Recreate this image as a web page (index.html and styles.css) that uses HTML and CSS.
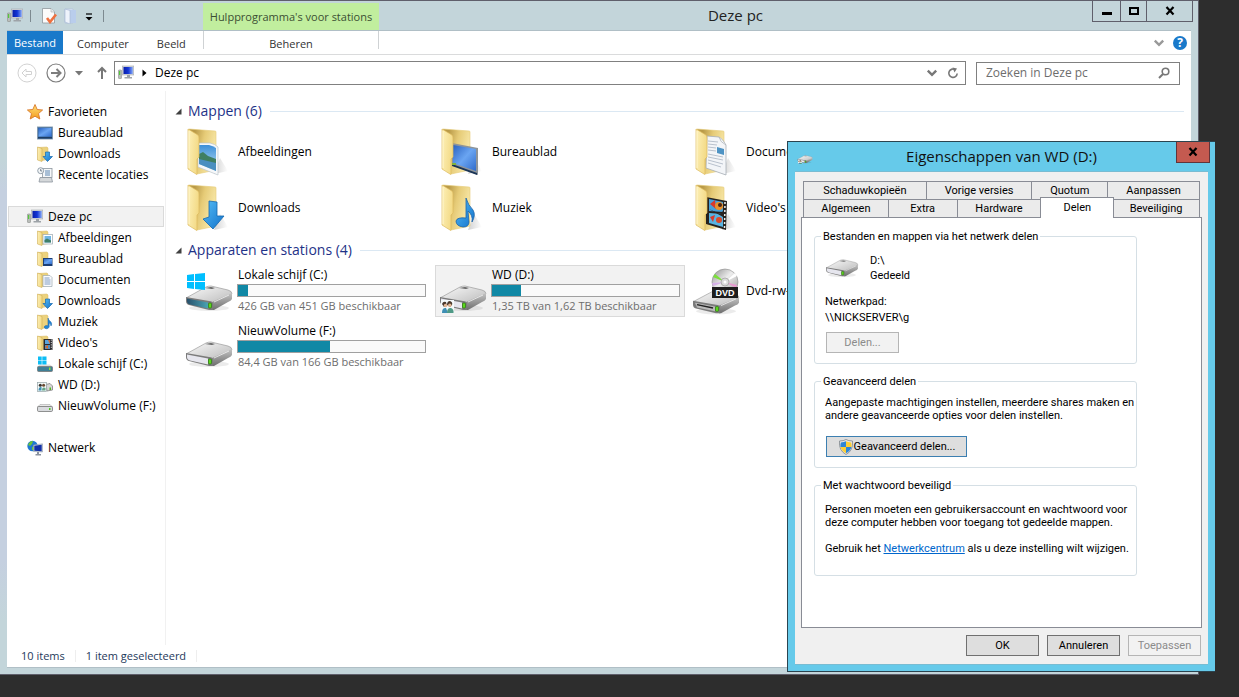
FILE: index.html
```html
<!DOCTYPE html>
<html lang="nl">
<head>
<meta charset="utf-8">
<title>Deze pc</title>
<link rel="stylesheet" href="styles.css">
</head>
<body>
<svg class="sprite" aria-hidden="true">
  <defs>
    <linearGradient id="gFlap" x1="0" y1="0" x2="1" y2="0.3"><stop offset="0" stop-color="#fdf0b8"/><stop offset="1" stop-color="#f3da86"/></linearGradient>
    <linearGradient id="gBack" x1="0" y1="0" x2="1" y2="0.4"><stop offset="0.2" stop-color="#b99a48"/><stop offset="0.55" stop-color="#e6cb77"/><stop offset="1" stop-color="#f8e8a8"/></linearGradient>
    <linearGradient id="gSky" x1="0" y1="0" x2="0" y2="1"><stop offset="0" stop-color="#3d8fd8"/><stop offset="1" stop-color="#bfe3f5"/></linearGradient>
    <linearGradient id="gScreen" x1="0" y1="0" x2="1" y2="1"><stop offset="0" stop-color="#2a62c0"/><stop offset="0.5" stop-color="#6aa5f2"/><stop offset="1" stop-color="#2f6bcb"/></linearGradient>
    <linearGradient id="gBlue" x1="0" y1="0" x2="1" y2="1"><stop offset="0" stop-color="#55bdf5"/><stop offset="1" stop-color="#1272cc"/></linearGradient>
    <linearGradient id="gTop" x1="0" y1="0" x2="1" y2="1"><stop offset="0" stop-color="#fbfbfb"/><stop offset="1" stop-color="#b9b9b9"/></linearGradient>
    <linearGradient id="gSide" x1="0" y1="0" x2="0" y2="1"><stop offset="0" stop-color="#c4c4c4"/><stop offset="1" stop-color="#6e6e6e"/></linearGradient>
    <linearGradient id="gTeal" x1="0" y1="0" x2="1" y2="0"><stop offset="0" stop-color="#27506b"/><stop offset="1" stop-color="#4aa3b3"/></linearGradient>
    <linearGradient id="gMon" x1="0" y1="0" x2="1" y2="0"><stop offset="0" stop-color="#0a1fa8"/><stop offset="0.5" stop-color="#1234d6"/><stop offset="1" stop-color="#86a8f4"/></linearGradient>
    <linearGradient id="gStar" x1="0" y1="0" x2="0" y2="1"><stop offset="0" stop-color="#ffe27a"/><stop offset="1" stop-color="#f39a1c"/></linearGradient>
    <linearGradient id="gDisc" x1="0" y1="0" x2="1" y2="1"><stop offset="0" stop-color="#8e8e8e"/><stop offset="0.45" stop-color="#ececec"/><stop offset="1" stop-color="#9a9a9a"/></linearGradient>
    <linearGradient id="gShade" x1="0" y1="0" x2="1" y2="0"><stop offset="0" stop-color="#9a9a9a" stop-opacity="0.45"/><stop offset="1" stop-color="#9a9a9a" stop-opacity="0"/></linearGradient>

    <symbol id="folderBase" viewBox="0 0 50 48">
      <path d="M30 46 L36 30 L44 43 Z" fill="url(#gShade)"/>
      <path d="M5 1 L31 3 Q32 3 32 4 L32 42 L13 46 Z" fill="url(#gBack)" stroke="#e6cb76" stroke-width="0.6"/>
    </symbol>
    <symbol id="folderFlap" viewBox="0 0 50 48">
      <path d="M4 1 L14 7 Q15 8 15 10 L15 29 L13 31 L13 46 Q13 47 12 46 L4 41 Z" fill="url(#gFlap)" stroke="#dcb95c" stroke-width="0.7"/>
      <path d="M5 3 L5 40" stroke="#fff6cf" stroke-width="1"/>
    </symbol>

    <symbol id="f-pictures" viewBox="0 0 50 48">
      <use href="#folderBase"/>
      <path d="M14 15 L26 15 Q31 16 34 19 L34 47 L14 39 Z" fill="#f6f8fa" stroke="#bcc4ca" stroke-width="0.7"/>
      <path d="M15 17 L25 17 Q29 18 32 20 L32 43 L15 36 Z" fill="url(#gSky)"/>
      <path d="M15 26 L19 24 L24 28 L32 31 L32 36 L15 33 Z" fill="#3f7f62"/>
      <path d="M15 31 L32 35 L32 43 L15 36 Z" fill="#4a8fc0"/>
      <use href="#folderFlap"/>
    </symbol>
    <symbol id="f-desktop" viewBox="0 0 50 48">
      <use href="#folderBase"/>
      <path d="M14 15 L40 20 L40 47 L14 37 Z" fill="#8e9499"/>
      <path d="M15 17 L38 21 L38 43 L15 35 Z" fill="url(#gScreen)"/>
      <path d="M14 36 L39 45 L39 47 L14 38 Z" fill="#1b3556"/>
      <path d="M14 35h4v2h-4z" fill="#7fb23c"/>
      <use href="#folderFlap"/>
    </symbol>
    <symbol id="f-docs" viewBox="0 0 50 48">
      <use href="#folderBase"/>
      <path d="M15 8 L27 9 Q31 11 34 17 L34 47 L14 40 Z" fill="#f3f5f8" stroke="#a6adb5" stroke-width="0.8"/>
      <path d="M27 9 Q28 14 34 17" fill="#fff" stroke="#a6adb5" stroke-width="0.8"/>
      <path d="M16 13 L26 14 M16 16 L25 17 M16 19 L24 20 M16 22 L24 23 M16 26 L31 29 M16 29 L31 32 M16 32 L31 36 M16 35 L29 39" stroke="#aab4c2" stroke-width="0.8"/>
      <path d="M25 19 L32 21 L32 27 L25 25 Z" fill="#4e93c4"/>
      <use href="#folderFlap"/>
    </symbol>
    <symbol id="f-downloads" viewBox="0 0 50 48">
      <use href="#folderBase"/><use href="#folderFlap"/>
      <path d="M25 17 L33 18 L33 32 L40 32 L29 45 L19 35 L25 33 Z" fill="url(#gBlue)" stroke="#1467ae" stroke-width="0.8"/>
    </symbol>
    <symbol id="f-music" viewBox="0 0 50 48">
      <use href="#folderBase"/><use href="#folderFlap"/>
      <path d="M28 14 Q30 21 35 26 Q38 31 34 38 Q35 31 30 27 L31 38 Q31 43 25 43 Q18 42 18 37 Q19 33 28 34 Z" fill="url(#gBlue)" stroke="#1b62a8" stroke-width="0.8"/>
    </symbol>
    <symbol id="f-videos" viewBox="0 0 50 48">
      <use href="#folderBase"/>
      <path d="M14 13 L35 17 L34 46 L14 40 Z" fill="#26221f"/>
      <path d="M17 15 L31 18 L31 28 L17 27 Z" fill="#47a0d8"/>
      <path d="M17 29 L31 30 L31 43 L17 39 Z" fill="#58b4e2"/>
      <path d="M18 20 L23 16 L24 25 Z M18 33 L23 31 L21 38Z" fill="#d8392b"/>
      <circle cx="27" cy="22" r="4" fill="#e8912b"/><circle cx="27" cy="36" r="3" fill="#d94a2b"/>
      <circle cx="28" cy="21" r="2" fill="#4a2415"/><path d="M17 25 L28 30 L31 27 L31 33Z" fill="#2b2320"/>
      <path d="M33 18 L32.500 45" stroke="#f2f2f2" stroke-width="1.500" stroke-dasharray="2 2"/>
      <use href="#folderFlap"/>
    </symbol>

    <symbol id="driveBody" viewBox="0 0 50 48">
      <ellipse cx="25" cy="41" rx="20" ry="3" fill="#000" opacity="0.08"/>
      <path d="M2 31 L22 20 Q24 19 27 19 L44 23 Q48 24 48 27 L30 36 L26 37 L4 32Z" fill="url(#gTop)" stroke="#8f8f8f" stroke-width="0.6"/>
      <path d="M28 35 L48 26 L48 32 Q47 34 44 35 L30 43 L28 43 Z" fill="url(#gSide)"/>
      <path d="M2 30 L25 34 Q29 34 29 37 L29 43 L25 43 L5 38 Q2 37 2 34 Z" fill="#7b7b7b"/>
      <path d="M21 21 L27 20 L31 21 L28 22Z" fill="#666"/>
      <path d="M30 35 L45 28" stroke="#f4f4f4" stroke-width="0.8"/>
    </symbol>
    <symbol id="driveLed" viewBox="0 0 50 48"><rect x="24.500" y="36" width="3" height="5" rx="1" fill="#5cd61c" stroke="#22720a" stroke-width="0.6"/></symbol>
    <symbol id="d-plain" viewBox="0 0 50 48">
      <use href="#driveBody"/>
      <path d="M3 31.500 L24 35.500 L24 41.500 L6 37.500 Q3 36.500 3 34 Z" fill="#e6e6ee"/>
      <use href="#driveLed"/>
    </symbol>
    <symbol id="d-system" viewBox="0 0 50 48">
      <use href="#driveBody"/>
      <path d="M3 31.500 L24 35.500 L24 41.500 L6 37.500 Q3 36.500 3 34 Z" fill="url(#gTeal)"/>
      <use href="#driveLed"/>
      <path d="M3 8 L10 7 V14 H3Z M11 7 L21 6 V14 H11Z M3 15 H10 V22 L3 21Z M11 15 H21 V23 L11 22Z" fill="#00bfff"/>
    </symbol>
    <symbol id="d-shared" viewBox="0 0 50 48">
      <use href="#d-plain"/>
      <rect x="3" y="33" width="13" height="13" fill="#f4f9fb"/>
      <path d="M4 37 Q5 34 8 35 L9 39 L6 40Z M9 38 Q9 34 12 34 Q15 35 14 38 L12 40Z" fill="#4a382c"/>
      <circle cx="7.500" cy="38.500" r="1.700" fill="#e3b694"/><circle cx="11.800" cy="38.300" r="1.700" fill="#e3b694"/>
      <path d="M4 46 Q4 40.500 8 41 L10 46Z" fill="#3f8fb4"/><path d="M9 46 Q9 40.500 13 41 Q16 42 15.500 46Z" fill="#4f9a86"/>
    </symbol>
    <symbol id="d-dvd" viewBox="0 0 50 48">
      <g transform="translate(-1 5) scale(1 0.960)"><use href="#driveBody" width="50" height="48"/><path d="M4 32 L24 36 L24 41 L6 37 Z" fill="#b9b9b9"/><path d="M6 34 L22 37.500" stroke="#222" stroke-width="1.500"/><use href="#driveLed" width="50" height="48"/></g>
      <circle cx="33" cy="15" r="13" fill="url(#gDisc)" stroke="#8c8c8c" stroke-width="0.6"/>
      <path d="M33 15 L21 10 L23 7Z" fill="#7be03a"/><path d="M33 15 L45 18 L44 21Z" fill="#e79bd0"/><path d="M33 15 L21 19 L20 16Z" fill="#d6b1e8"/><path d="M33 15 L45 9 L43 6Z" fill="#fff"/>
      <circle cx="33" cy="15" r="4" fill="#dadada" stroke="#9b9b9b" stroke-width="0.7"/><circle cx="33" cy="15" r="1.500" fill="#fff"/>
      <rect x="20" y="20" width="26" height="11" fill="#1d1d1d"/>
      <text x="33" y="29" text-anchor="middle" class="dvd-text">DVD</text>
    </symbol>

    <symbol id="s-pc" viewBox="0 0 16 16">
      <rect x="0.500" y="5" width="3" height="8.500" rx="0.500" fill="#b9bdb9" stroke="#8b8f8b" stroke-width="0.6"/><rect x="1" y="6" width="1.200" height="4" fill="#55c93a"/>
      <rect x="4.500" y="1" width="11.300" height="9" fill="#d5d8dc" stroke="#a4a8ad" stroke-width="0.6"/><rect x="5.500" y="2" width="9.300" height="7" fill="url(#gMon)"/>
      <path d="M9 10h3v2h2v1.500H6.500V12H9z" fill="#9ea3a8"/>
    </symbol>
    <symbol id="s-star" viewBox="0 0 16 16"><path d="M8 0.500 L10.200 5.500 L15.600 6 L11.500 9.600 L12.800 15 L8 12.200 L3.200 15 L4.500 9.600 L0.400 6 L5.800 5.500 Z" fill="url(#gStar)" stroke="#d9782a" stroke-width="0.9"/></symbol>
    <symbol id="s-desk" viewBox="0 0 16 16"><rect x="0.500" y="2" width="15" height="12" fill="#39699c" stroke="#7f97ad" stroke-width="0.9"/><rect x="1.500" y="3" width="13" height="8.500" fill="url(#gScreen)"/><path d="M1 12h14v1.500H1z" fill="#1d3d63"/></symbol>
    <symbol id="s-folder" viewBox="0 0 16 16"><path d="M1 1.500 L10 1 L11 2 L11 13.500 L5 14.500 Z" fill="#ecd27d" stroke="#d8b964" stroke-width="0.5"/><path d="M0.500 1 L5 2.500 L5 15.500 L0.500 14 Z" fill="url(#gFlap)" stroke="#d0ae55" stroke-width="0.6"/></symbol>
    <symbol id="s-down" viewBox="0 0 16 16"><use href="#s-folder"/><path d="M8.500 6 h4 v4.500 h3 L10.500 15.500 L6 10.500 h2.500z" fill="url(#gBlue)" stroke="#1467ae" stroke-width="0.7"/></symbol>
    <symbol id="s-pic" viewBox="0 0 16 16"><use href="#s-folder"/><rect x="6" y="4.500" width="9.500" height="9.500" fill="#fff" stroke="#9aa7b0" stroke-width="0.7"/><rect x="7.500" y="6" width="6.500" height="6.500" fill="#6fb5e4"/><path d="M7.500 10 L10 8.500 L14 10.500 V12.500 H7.500z" fill="#3f7f6a"/></symbol>
    <symbol id="s-fdesk" viewBox="0 0 16 16"><use href="#s-folder"/><path d="M6 7 h9.500 v8 h-9.500z" fill="#1c3f75"/><path d="M7 8 h8 v5 h-8z" fill="url(#gScreen)"/></symbol>
    <symbol id="s-doc" viewBox="0 0 16 16"><use href="#s-folder"/><path d="M6 3.500 h7 l2 2 v9 h-9z" fill="#fafbfd" stroke="#9aa7b0" stroke-width="0.7"/><path d="M7.500 6h5M7.500 8h6M7.500 10h6M7.500 12h6" stroke="#5f86b4" stroke-width="0.8"/></symbol>
    <symbol id="s-music" viewBox="0 0 16 16"><use href="#s-folder"/><path d="M11 4 Q11.500 6.500 14 8 Q15.500 10 14 12 Q14 9.500 12.200 9 V13 Q11.500 15 9 14.800 Q6.500 14 7.500 12.300 Q8.500 11 11 11.700Z" fill="#1f86d8" stroke="#1b62a8" stroke-width="0.5"/></symbol>
    <symbol id="s-video" viewBox="0 0 16 16"><use href="#s-folder"/><rect x="6.500" y="4" width="9" height="11" fill="#2a2a2e"/><rect x="8" y="5" width="5" height="4" fill="#5aa4dc"/><rect x="8" y="10" width="5" height="4" fill="#4f8ec2"/><path d="M11 5h2v4z M8 12l3-2v4z" fill="#d9692b"/><path d="M14.300 4.500v10" stroke="#eee" stroke-width="0.9" stroke-dasharray="1.200 1.200"/></symbol>
    <symbol id="s-recent" viewBox="0 0 16 16"><rect x="5.500" y="1.500" width="9.500" height="9" fill="#f5f7f9" stroke="#8d969e" stroke-width="0.8"/><path d="M8 4h5M8 6h5M8 8h5" stroke="#5d87b3"/><path d="M3 10.500h11.500l1 4.500H2z" fill="#d5d8da" stroke="#8d969e" stroke-width="0.8"/><circle cx="3.700" cy="3.700" r="3" fill="#f3f6f8" stroke="#8996a3" stroke-width="0.9"/><path d="M3.700 2v2h1.500" stroke="#456" stroke-width="0.7" fill="none"/></symbol>
    <symbol id="s-hdd" viewBox="0 0 16 16"><path d="M3 6.500h10l2.500 2.500H0.500z" fill="#e8e8e8" stroke="#9c9c9c" stroke-width="0.5"/><rect x="0.500" y="8.500" width="15" height="5" rx="1.200" fill="#d9dbde" stroke="#777" stroke-width="0.8"/><rect x="12" y="10" width="1.500" height="2" fill="#4fc81e"/></symbol>
    <symbol id="s-sys" viewBox="0 0 16 16"><path d="M3 8.500h10l2.500 2H0.500z" fill="#ddd"/><rect x="0.500" y="10.500" width="15" height="5" rx="1" fill="#3f7f96" stroke="#777" stroke-width="0.8"/><rect x="12" y="11.500" width="1.500" height="2.500" fill="#8be03a"/><path d="M1 0.500h3.700v3.700H1zM5.300 0.500H9.500v3.700H5.300zM1 4.800h3.700v3.700H1zM5.300 4.800H9.500v3.700H5.300z" fill="#0cbdf5"/></symbol>
    <symbol id="s-share" viewBox="0 0 16 16"><path d="M9 7.500 L13 6.500 L15.500 9 V13 L10 14z" fill="#d6d6d6" stroke="#808080" stroke-width="0.8"/><rect x="12.500" y="10.500" width="1.500" height="2.500" fill="#4fb81e"/><rect x="0.500" y="5.500" width="9" height="9" fill="#f2f8f8" stroke="#93a3a6" stroke-width="0.7"/><circle cx="3.300" cy="8.300" r="1.500" fill="#3b3530"/><circle cx="6.600" cy="8.300" r="1.500" fill="#6b4a32"/><path d="M1.500 13.500q0-4 3-3.500v3.500z" fill="#3f8fb4"/><path d="M5 13.500q0-4 3.500-2.500v2.500z" fill="#63a486"/></symbol>
    <symbol id="s-net" viewBox="0 0 16 16"><circle cx="5.500" cy="6" r="5.200" fill="#1e78d2"/><path d="M2 3 Q4 0.500 6 1.200 L5 4 L3 6 L1 5Z M5 7 L8 6 L7 10.500 L5 10Z" fill="#6bc536"/><path d="M6.500 5 L15.500 3.800 V12 L6.500 11.500Z" fill="#cfd5dc" stroke="#8390a0" stroke-width="0.5"/><path d="M7.300 5.800 L14.700 4.800 V11.200 L7.300 10.800Z" fill="#1231a8"/><path d="M10 12h2v2h2v1.500H8.500V14H10z" fill="#8b93a0"/></symbol>
    <symbol id="s-check" viewBox="0 0 16 16"><path d="M1.500 0.500 h8.500 l3.500 3.500 v11 h-12z" fill="#fbfbfb" stroke="#8f979c" stroke-width="0.8"/><path d="M10 0.500v3.500h3.500" fill="#e8ebed" stroke="#a5acb0" stroke-width="0.6"/><path d="M6 10 L9 14 L15 6.500" fill="none" stroke="#ee7140" stroke-width="2.600"/></symbol>
    <symbol id="s-new" viewBox="0 0 16 16"><path d="M2 1h8v14H2z" fill="#dfe8f7" stroke="#b0c0da" stroke-width="0.7"/><path d="M7 2h6v13H7z" fill="#b9cdec"/><path d="M2 1l5 1.500V16l-5-2z" fill="#eef3fb" stroke="#a9bad6" stroke-width="0.7"/></symbol>
    <symbol id="s-shield" viewBox="0 0 16 16"><path d="M8 0.500 Q10.500 2 14.500 2 Q15.500 11.500 8 15.500 Q0.500 11.500 1.500 2 Q5.500 2 8 0.500Z" fill="#e8e8e8" stroke="#7e858c" stroke-width="0.8"/><path d="M8 2.200V8H2.500Q2.200 5.500 2.800 3.500Q6 3.200 8 2.200Z M8 8h5.400Q12.500 12 8 14.200Z" fill="#2d86d6"/><path d="M8 2.200Q10 3.200 13.200 3.500Q13.800 5.500 13.500 8H8Z M8 8v6.200Q3.500 12 2.500 8Z" fill="#fccf35"/></symbol>
    <symbol id="caretDown" viewBox="0 0 10 8"><path d="M1.500 2 L5 5.500 L8.500 2" fill="none" stroke="currentColor" stroke-width="2"/></symbol>
  </defs>
</svg>

<div class="desktop">
  <main class="explorer">
    <header class="titlebar">
      <div class="quick">
        <svg class="i16"><use href="#s-pc"/></svg>
        <span class="sep"></span>
        <button class="bare" aria-label="Eigenschappen"><svg class="i16"><use href="#s-check"/></svg></button>
        <button class="bare" aria-label="Nieuwe map"><svg class="i16"><use href="#s-new"/></svg></button>
        <button class="bare more" aria-label="Werkbalk aanpassen"><svg width="8" height="8" viewBox="0 0 8 8"><path d="M1 1h6" stroke="#000" stroke-width="1.200"/><path d="M0.500 4h7L4 7.500z"/></svg></button>
        <span class="sep"></span>
      </div>
      <div class="context">Hulpprogramma's voor stations</div>
      <h1 class="title">Deze pc</h1>
      <div class="controls">
        <button aria-label="Minimaliseren"><svg width="12" height="12" viewBox="0 0 12 12"><path d="M1 8.500h10" stroke="#000" stroke-width="3"/></svg></button>
        <button class="narrow" aria-label="Maximaliseren"><svg width="12" height="12" viewBox="0 0 12 12"><path d="M2 3h8v6H2z" fill="none" stroke="#000" stroke-width="2"/></svg></button>
        <button class="wide" aria-label="Sluiten"><svg width="12" height="12" viewBox="0 0 12 12"><path d="M2.500 2l7 7.500M9.500 2l-7 7.500" stroke="#000" stroke-width="2.200"/></svg></button>
      </div>
    </header>

    <div class="client">
      <nav class="ribbon">
        <div class="ribbon-tabs">
          <button class="file">Bestand</button><button>Computer</button><button>Beeld</button>
        </div>
        <button class="manage">Beheren</button>
        <div class="ribbon-end">
          <button class="bare" aria-label="Lint uitvouwen"><svg width="12" height="10" class="grey"><use href="#caretDown"/></svg></button>
          <button class="help" aria-label="Help">?</button>
        </div>
      </nav>

      <div class="navbar">
        <button class="bare" aria-label="Vorige"><svg width="20" height="20" viewBox="0 0 20 20" fill="none" stroke="#d2d2d2"><circle cx="10" cy="10" r="9"/><path d="M5 10l4-4v2.500h5.500v3H9V14z"/></svg></button>
        <button class="bare fwd" aria-label="Volgende"><svg width="20" height="20" viewBox="0 0 20 20" fill="none" stroke="#7d7d7d"><circle cx="10" cy="10" r="9" stroke-width="1.200"/><path d="M5 10h9M10.500 6l4 4-4 4" stroke-width="2"/></svg></button>
        <button class="bare hist" aria-label="Recente locaties"><svg width="8" height="5" viewBox="0 0 8 5"><path d="M0 0h8L4 4.500z" fill="#777"/></svg></button>
        <button class="bare up" aria-label="Omhoog"><svg width="10" height="14" viewBox="0 0 10 14" fill="none" stroke="#777" stroke-width="2"><path d="M5 13V2M1 6l4-4 4 4"/></svg></button>
        <div class="address">
          <svg class="i16"><use href="#s-pc"/></svg>
          <svg width="5" height="8" viewBox="0 0 5 8"><path d="M0.500 0.500v7L4.500 4z"/></svg>
          <span class="path">Deze pc</span>
          <button class="bare" aria-label="Vorige locaties"><svg width="12" height="10" class="dim"><use href="#caretDown"/></svg></button>
          <button class="bare" aria-label="Vernieuwen"><svg width="12" height="12" viewBox="0 0 12 12"><path d="M8.500 2.800A4.200 4.200 0 1 0 10.200 6.500" fill="none" stroke="#777" stroke-width="1.600"/><path d="M5.500 0.500l4.500 1-2.500 4z" fill="#777"/></svg></button>
        </div>
        <label class="search"><input type="text" placeholder="Zoeken in Deze pc" aria-label="Zoeken in Deze pc"><svg width="12" height="12" viewBox="0 0 12 12" fill="none" stroke="#777"><circle cx="7.500" cy="4.500" r="3.300" stroke-width="1.600"/><path d="M5 7L1 11" stroke-width="2"/></svg></label>
      </div>

      <div class="body">
        <aside class="tree">
          <a class="node" href="#"><svg class="i16"><use href="#s-star"/></svg>Favorieten</a>
          <a class="node sub" href="#"><svg class="i16"><use href="#s-desk"/></svg>Bureaublad</a>
          <a class="node sub" href="#"><svg class="i16"><use href="#s-down"/></svg>Downloads</a>
          <a class="node sub" href="#"><svg class="i16"><use href="#s-recent"/></svg>Recente locaties</a>
          <a class="node head current" href="#"><svg class="i16"><use href="#s-pc"/></svg>Deze pc</a>
          <a class="node sub" href="#"><svg class="i16"><use href="#s-pic"/></svg>Afbeeldingen</a>
          <a class="node sub" href="#"><svg class="i16"><use href="#s-fdesk"/></svg>Bureaublad</a>
          <a class="node sub" href="#"><svg class="i16"><use href="#s-doc"/></svg>Documenten</a>
          <a class="node sub" href="#"><svg class="i16"><use href="#s-down"/></svg>Downloads</a>
          <a class="node sub" href="#"><svg class="i16"><use href="#s-music"/></svg>Muziek</a>
          <a class="node sub" href="#"><svg class="i16"><use href="#s-video"/></svg>Video's</a>
          <a class="node sub" href="#"><svg class="i16"><use href="#s-sys"/></svg>Lokale schijf (C:)</a>
          <a class="node sub" href="#"><svg class="i16"><use href="#s-share"/></svg>WD (D:)</a>
          <a class="node sub" href="#"><svg class="i16"><use href="#s-hdd"/></svg>NieuwVolume (F:)</a>
          <a class="node head" href="#"><svg class="i16"><use href="#s-net"/></svg>Netwerk</a>
        </aside>

        <section class="files">
          <h2 class="group"><svg width="7" height="7" viewBox="0 0 7 7"><path d="M6.500 0.500v6h-6z" fill="#404040"/></svg>Mappen (6)</h2>
          <div class="tiles">
            <div class="tile"><svg class="big"><use href="#f-pictures"/></svg><span>Afbeeldingen</span></div>
            <div class="tile"><svg class="big"><use href="#f-desktop"/></svg><span>Bureaublad</span></div>
            <div class="tile"><svg class="big"><use href="#f-docs"/></svg><span>Documenten</span></div>
            <div class="tile"><svg class="big"><use href="#f-downloads"/></svg><span>Downloads</span></div>
            <div class="tile"><svg class="big"><use href="#f-music"/></svg><span>Muziek</span></div>
            <div class="tile"><svg class="big"><use href="#f-videos"/></svg><span>Video's</span></div>
          </div>
          <h2 class="group"><svg width="7" height="7" viewBox="0 0 7 7"><path d="M6.500 0.500v6h-6z" fill="#404040"/></svg>Apparaten en stations (4)</h2>
          <div class="tiles">
            <div class="tile"><svg class="big"><use href="#d-system"/></svg><div class="drive"><span>Lokale schijf (C:)</span><div class="bar"><div class="fill" style="width:5.500%"></div></div><span class="free">426 GB van 451 GB beschikbaar</span></div></div>
            <div class="tile selected"><svg class="big"><use href="#d-shared"/></svg><div class="drive"><span>WD (D:)</span><div class="bar"><div class="fill" style="width:15.500%"></div></div><span class="free">1,35 TB van 1,62 TB beschikbaar</span></div></div>
            <div class="tile"><svg class="big"><use href="#d-dvd"/></svg><span>Dvd-rw-station (E:)</span></div>
            <div class="tile"><svg class="big"><use href="#d-plain"/></svg><div class="drive"><span>NieuwVolume (F:)</span><div class="bar"><div class="fill" style="width:49%"></div></div><span class="free">84,4 GB van 166 GB beschikbaar</span></div></div>
          </div>
        </section>
      </div>
      <footer class="status"><span>10 items</span><span>1 item geselecteerd</span></footer>
    </div>
  </main>

  <section class="dialog" role="dialog" aria-labelledby="dlg-title">
    <header class="dlg-bar">
      <svg class="i16" viewBox="0 0 50 48"><use href="#d-shared"/></svg>
      <h2 id="dlg-title">Eigenschappen van WD (D:)</h2>
      <button class="dlg-close" aria-label="Sluiten"><svg width="12" height="12" viewBox="0 0 12 12"><path d="M2.500 2l7 7.500M9.500 2l-7 7.500" stroke="#000" stroke-width="2.200"/></svg></button>
    </header>
    <div class="dlg-client">
      <div class="tabs" role="tablist">
        <div class="tab-row back"><button role="tab">Schaduwkopieën</button><button role="tab">Vorige versies</button><button role="tab">Quotum</button><button role="tab">Aanpassen</button></div>
        <div class="tab-row front"><button role="tab">Algemeen</button><button role="tab">Extra</button><button role="tab">Hardware</button><button role="tab" class="active" aria-selected="true">Delen</button><button role="tab">Beveiliging</button></div>
      </div>
      <div class="panel" role="tabpanel">
        <fieldset class="share">
          <legend>Bestanden en mappen via het netwerk delen</legend>
          <div class="share-head"><svg width="34" height="18" viewBox="1 18 48 26"><use href="#d-plain" width="50" height="48"/></svg><p>D:\<br>Gedeeld</p></div>
          <p class="netpath">Netwerkpad:<br>\\NICKSERVER\g</p>
          <button class="btn" disabled>Delen...</button>
        </fieldset>
        <fieldset class="advanced">
          <legend>Geavanceerd delen</legend>
          <p>Aangepaste machtigingen instellen, meerdere shares maken en andere geavanceerde opties voor delen instellen.</p>
          <button class="btn focus"><svg class="i16"><use href="#s-shield"/></svg>Geavanceerd delen...</button>
        </fieldset>
        <fieldset class="password">
          <legend>Met wachtwoord beveiligd</legend>
          <p>Personen moeten een gebruikersaccount en wachtwoord voor deze computer hebben voor toegang tot gedeelde mappen.</p>
          <p>Gebruik het <a href="#">Netwerkcentrum</a> als u deze instelling wilt wijzigen.</p>
        </fieldset>
      </div>
      <div class="actions"><button class="btn">OK</button><button class="btn">Annuleren</button><button class="btn" disabled>Toepassen</button></div>
    </div>
  </section>
</div>
</body>
</html>
```
FILE: styles.css
```css
* { box-sizing: border-box; }
body { margin: 0; font: 12px/16px "Open Sans", "Noto Sans", sans-serif; color: #000; background: #2d2d2d; }
h1, h2, p { margin: 0; font-weight: 400; }
button { font: inherit; color: inherit; margin: 0; padding: 0; border: 0; background: none; }
svg { display: block; flex: none; }
.sprite { position: absolute; width: 0; height: 0; }
.i16 { width: 16px; height: 16px; }
.bare { display: flex; align-items: center; justify-content: center; }
.grey { color: #999; }
.dim { color: #777; }
.dvd-text { font: bold 9px "Liberation Sans", sans-serif; fill: #fff; }

.desktop { position: relative; display: flex; min-height: 100vh; padding: 0 40px 22px 0; overflow: hidden; }

.explorer { flex: 1; min-width: 0; display: flex; flex-direction: column; padding: 0 7px 6px; background: linear-gradient(#c3d5da 160px, #c5d0e0 190px, #c5d0e0 560px, #c3d5da 620px); border: solid #5f5f6b; border-width: 1px 1px 1px 0; }
.titlebar { display: grid; grid-template-columns: 196px 176px 1fr auto; height: 29px; flex: none; margin-right: -2px; background: #c3d5da; }
.quick { display: flex; align-items: center; gap: 6px; }
.quick .sep { width: 1px; height: 12px; margin: 0 4px 0 1px; background: #7d8a90; }
.quick .more { margin: 2px 3px 0 0; }
.context { align-self: end; height: 27px; line-height: 28px; text-align: center; font-size: 11px; color: #3b4f33; background: #c1ee9e; white-space: nowrap; }
.title { font-size: 15px; line-height: 29px; text-align: center; color: #222; }
.controls { display: flex; align-items: flex-start; }
.controls button { display: flex; align-items: center; justify-content: center; width: 28px; height: 21px; border: solid #5f5f6b; border-width: 0 0 1px 1px; }
.controls .narrow { width: 26px; }
.controls .wide { width: 47px; border-right-width: 1px; }

.client { flex: 1; display: flex; flex-direction: column; min-height: 0; background: #fff; border: solid #b0bfc6; border-width: 1px 0; }
.ribbon { display: grid; grid-template-columns: 196px 176px 1fr; height: 24px; flex: none; border-bottom: 1px solid #dadbdc; font-size: 11px; color: #333; }
.ribbon-tabs { display: flex; }
.ribbon-tabs button { padding: 2px 14px 0; }
.ribbon-tabs .file { padding: 0 7px; color: #fff; background: #1979ca; }
.ribbon .manage { padding-top: 2px; height: 18px; line-height: 22px; border: solid #cfd2d4; border-width: 0 1px; }
.ribbon-end { display: flex; justify-content: flex-end; align-items: center; gap: 8px; padding-right: 4px; }
.help { width: 14px; height: 14px; border-radius: 50%; background: #1979ca; color: #fff; font-size: 12px; font-weight: 700; line-height: 14px; }

.navbar { display: flex; align-items: center; height: 36px; flex: none; padding: 0 11px 0 10px; }
.fwd { margin-left: 9px; }
.hist { margin-left: 9px; }
.up { margin-left: 14px; }
.address { flex: 1; display: flex; align-items: center; height: 24px; margin: 0 10px 0 7px; padding: 0 6px 0 3px; border: 1px solid #808080; }
.address svg + svg { margin-left: 8px; }
.address .path { flex: 1; margin-left: 8px; }
.address .bare + .bare { margin-left: 9px; }
.search { display: flex; align-items: center; width: 204px; height: 23px; padding: 0 9px; border: 1px solid #808080; }
.search input { flex: 1; min-width: 0; padding: 0; border: 0; outline: 0; font: inherit; background: none; }
.search input::placeholder { color: #6d6d6d; opacity: 1; }

.body { flex: 1; display: flex; min-height: 0; }
.tree { width: 159px; flex: none; padding: 10px 1px 0; border-right: 1px solid #f1f1f1; }
.node { display: flex; align-items: center; gap: 5px; height: 21px; padding-left: 18px; border: 1px solid transparent; color: #000; text-decoration: none; white-space: nowrap; }
.sub { padding-left: 28px; }
.head { margin-top: 21px; }
.current { background: #f2f2f2; border-color: #dadada; }

.files { flex: 1; min-width: 0; padding: 10px 7px 0 9px; }
.group { display: flex; align-items: center; height: 20px; font-size: 14px; color: #1e3287; white-space: nowrap; }
.group svg { margin-right: 6px; }
.group::after { content: ""; flex: 1; height: 1px; margin-left: 8px; background: #dbe8f3; }
.tiles { display: grid; grid-template-columns: repeat(auto-fill, 250px); gap: 4px; margin: 5px 0 6px 6px; }
.tile { display: flex; align-items: center; height: 52px; padding: 0 4px 0 2px; border: 1px solid transparent; white-space: nowrap; }
.tile span { padding-left: 4px; }
.tile .drive { flex: 1; padding: 0 0 2px 3px; }
.tile .drive span { display: block; padding-left: 1px; }
.drive .free { font-size: 11px; color: #6d6d6d; }
.selected { background: #f2f2f2; border-color: #dadada; }
.big { width: 50px; height: 48px; }
.bar { height: 13px; border: 1px solid #a0a0a0; background: #fafafa; margin: 1px 0; }
.fill { height: 100%; background: #1088a5; }

.status { display: flex; align-items: center; height: 22px; flex: none; padding-left: 14px; font-size: 11px; color: #1e395b; }
.status span { padding-right: 10px; margin-right: 10px; line-height: 12px; border-right: 1px solid #eee; }

.dialog { position: absolute; top: 141px; right: 24px; width: 428px; display: flex; flex-direction: column; padding: 0 7px 6px; border: solid #2b4450; border-width: 1px 0 1px 1px; background: #66caea; font: 11px/13px Roboto, "Liberation Sans", Arial, sans-serif; }
.dlg-bar { display: grid; grid-template-columns: 36px 1fr 36px; height: 29px; align-items: center; }
.dlg-bar h2 { font: 15px/29px "Open Sans", "Noto Sans", sans-serif; text-align: center; color: #111; }
.dlg-bar .i16 { margin-left: 2px; }
.dlg-close { display: flex; align-items: center; justify-content: center; align-self: start; width: 34px; height: 21px; margin-left: 4px; background: #c45a50; border: solid #61343a; border-width: 0 1px 1px; }
.dlg-client { padding: 9px 6px 8px; background: #f0f0f0; border: 1px solid #79bcd2; border-width: 1px 0; }
.tabs { padding: 0 2px; }
.tab-row { display: grid; }
.tab-row button { height: 18px; border: solid #898c95; border-width: 1px 1px 0 0; background: #ebebeb; line-height: 18px; }
.tab-row button:first-child { border-left-width: 1px; }
.back { grid-template-columns: 124fr 106fr 76fr 92fr; }
.front { grid-template-columns: 86fr 69fr 84fr 72fr 87fr; }
.front .active { position: relative; z-index: 1; height: 21px; margin: -2px -1px -1px; border-left-width: 1px; background: #fff; }
.panel { min-height: 411px; padding: 12px; border: 1px solid #898c95; background: #fff; }

fieldset { width: 323px; min-width: 0; margin: 0 0 11px; padding: 0 0 10px 10px; border: 1px solid #d5dfe5; border-radius: 3px; }
legend { margin-left: -4px; padding: 0 2px; line-height: 13px; }
.share-head { display: flex; align-items: center; gap: 11px; padding-top: 10px; line-height: 15px; }
.netpath { margin: 11px 0 6px; line-height: 16px; }
.advanced p { padding: 8px 0 14px; }
.password p { padding-top: 11px; }
.password p + p { padding: 13px 0 10px; }
.password a { color: #0066cc; }
.btn { display: flex; align-items: center; justify-content: center; width: 73px; height: 21px; border: 1px solid #707070; background: #dedede; }
.btn:disabled { color: #8b8b8b; border-color: #b5b5b5; background: #f2f2f2; }
fieldset .btn { margin-left: 1px; }
.btn.focus { width: 141px; border-color: #3c7fb1; }
.actions { display: flex; justify-content: flex-end; gap: 8px; margin-top: 7px; padding-right: 1px; }
```
